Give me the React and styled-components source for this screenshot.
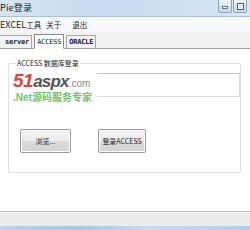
import React from "react";
import styled, { createGlobalStyle } from "styled-components";

const Global = createGlobalStyle`
  html, body { margin: 0; padding: 0; background: #fff; }
  body { width: 250px; height: 230px; overflow: hidden; }
`;

const Win = styled.div`
  width: 250px;
  height: 230px;
  display: flex;
  flex-direction: column;
  font-family: "Noto Sans CJK SC", "Liberation Sans", sans-serif;
  color: #222;
  overflow: hidden;
`;

const TitleBar = styled.div`
  height: 16px;
  flex: none;
  display: flex;
  align-items: flex-start;
  justify-content: space-between;
  background: linear-gradient(90deg, #d6e5f4 0%, #c7daef 40%, #cfe0f2 70%, #d9e7f5 100%);
  border-bottom: 1px solid #a9c0da;
`;

const Title = styled.span`
  font-size: 9px;
  line-height: 15px;
  color: #1b1b1b;
  letter-spacing: 0.2px;
`;

const WinButtons = styled.div`
  display: flex;
  gap: 1px;
  margin-right: 3px;
`;

const WinBtn = styled.div`
  width: 12px;
  height: 12px;
  border: 1px solid #8ea3ba;
  border-top: none;
  border-radius: 0 0 2px 2px;
  background: linear-gradient(#eef3f9, #c9d7e7);
  display: flex;
  align-items: center;
  justify-content: center;
`;

const MenuBar = styled.div`
  height: 15px;
  flex: none;
  display: flex;
  align-items: center;
  background: #f6f8fb;
  font-size: 9px;
`;

const MenuItem = styled.span`
  line-height: 15px;
  margin-right: ${(p) => p.$mr}px;
`;

const Cjk = styled.span`
  font-size: 7.5px;
`;

const TabStrip = styled.div`
  height: 15px;
  flex: none;
  display: flex;
  align-items: flex-end;
  gap: 2px;
  background: #f1f1f1;
  border-bottom: 1px solid #9e9e9e;
  padding-top: 1px;
`;

const Tab = styled.div`
  height: ${(p) => (p.$active ? 13 : 12)}px;
  margin-bottom: -1px;
  padding: 0 2px;
  display: flex;
  align-items: center;
  font-family: "DejaVu Sans Mono", "Liberation Mono", monospace;
  font-size: 7px;
  font-weight: ${(p) => (p.$bold ? 700 : 400)};
  letter-spacing: -0.2px;
  color: #222;
  white-space: nowrap;
  background: ${(p) => (p.$active ? "#ffffff" : "#f3f3f3")};
  border: 1px solid ${(p) => (p.$active ? "#8a8a8a" : "#a8a8a8")};
  border-bottom-color: ${(p) => (p.$active ? "#ffffff" : "#9e9e9e")};
  margin-left: ${(p) => p.$ml || 0}px;
`;

const Content = styled.div`
  flex: 1;
  background: #fff;
  padding: 10px 9px 0 8px;
  border-bottom: 1px solid #bdbdbd;
`;

const Group = styled.fieldset`
  margin: 0;
  height: 114px;
  box-sizing: border-box;
  border: 1px solid #e0e0e0;
  border-radius: 2px;
  padding: 6px 0 0 4px;
  position: relative;
`;

const Legend = styled.legend`
  font-size: 7px;
  padding: 0 1px;
  margin-left: 3px;
  color: #222;
  line-height: 8px;
`;

const InputRow = styled.div`
  position: relative;
  height: 25px;
`;

const Input = styled.div`
  height: 24px;
  box-sizing: border-box;
  border: 1px solid #dadada;
  border-top-color: #c8c8c8;
  background: #fff;
`;

const Watermark = styled.div`
  position: absolute;
  left: 0;
  top: -1px;
  width: 84px;
  height: 32px;
  background: #fff;
  display: flex;
  flex-direction: column;
  font-family: "Liberation Sans", "Noto Sans CJK SC", sans-serif;
`;

const WmTop = styled.div`
  display: flex;
  align-items: baseline;
  font-style: italic;
  font-weight: 900;
  line-height: 18px;
  height: 21px;
`;

const Wm51 = styled.span`
  color: #e0463c;
  font-size: 19px;
  letter-spacing: -0.5px;
`;

const WmAspx = styled.span`
  color: #555;
  font-size: 17px;
  letter-spacing: -0.8px;
`;

const WmCom = styled.span`
  color: #888;
  font-size: 10px;
  font-style: normal;
  font-weight: 400;
`;

const WmBottom = styled.div`
  color: #6cc46c;
  font-size: 10px;
  font-weight: 700;
  line-height: 10px;
  white-space: nowrap;
`;

const Buttons = styled.div`
  display: flex;
  gap: 27px;
  margin-top: 31px;
  margin-left: 7px;
`;

const Btn = styled.div`
  width: ${(p) => p.$w}px;
  height: 24px;
  box-sizing: border-box;
  border: 1px solid #9c9c9c;
  border-radius: 2px;
  background: linear-gradient(#f4f4f4 0%, #ebebeb 50%, #dcdcdc 51%, #d2d2d2 100%);
  display: flex;
  align-items: center;
  justify-content: center;
  font-size: 7px;
  color: #222;
  box-shadow: inset 0 0 0 1px #fbfbfb;
`;

const Status = styled.div`
  height: 13px;
  flex: none;
  background: #ececec;
  border-top: 1px solid #f7f7f7;
`;

const Taskbar = styled.div`
  height: 4px;
  flex: none;
  background: linear-gradient(90deg, #bcd3ea, #a9c6e4 30%, #c7dcef 60%, #b4cde8);
`;

export default function App() {
  return (
    <>
      <Global />
      <Win>
        <TitleBar>
          <Title>Pie登录</Title>
          <WinButtons>
            <WinBtn>
              <svg width="6" height="6" viewBox="0 0 6 6">
                <rect x="0.5" y="3.5" width="5" height="2" fill="#fff" stroke="#4a5a6e" strokeWidth="0.8" />
              </svg>
            </WinBtn>
            <WinBtn>
              <svg width="7" height="7" viewBox="0 0 7 7">
                <rect x="0.5" y="0.5" width="6" height="6" fill="#fff" stroke="#4a5a6e" strokeWidth="1" />
                <rect x="1.5" y="2" width="4" height="3.5" fill="#dfe6ee" />
              </svg>
            </WinBtn>
          </WinButtons>
        </TitleBar>
        <MenuBar>
          <MenuItem $mr={5}>EXCEL<Cjk>工具</Cjk></MenuItem>
          <MenuItem $mr={11}><Cjk>关于</Cjk></MenuItem>
          <MenuItem $mr={0}><Cjk>退出</Cjk></MenuItem>
        </MenuBar>
        <TabStrip>
          <Tab $ml={-6} $bold>. server</Tab>
          <Tab $active>ACCESS</Tab>
          <Tab $bold>ORACLE</Tab>
        </TabStrip>
        <Content>
          <Group>
            <Legend>ACCESS 数据库登录</Legend>
            <InputRow>
              <Input />
              <Watermark>
                <WmTop>
                  <Wm51>51</Wm51>
                  <WmAspx>aspx</WmAspx>
                  <WmCom>.com</WmCom>
                </WmTop>
                <WmBottom>.Net源码服务专家</WmBottom>
              </Watermark>
            </InputRow>
            <Buttons>
              <Btn $w={51}>浏览...</Btn>
              <Btn $w={48}>登录ACCESS</Btn>
            </Buttons>
          </Group>
        </Content>
        <Status />
        <Taskbar />
      </Win>
    </>
  );
}
